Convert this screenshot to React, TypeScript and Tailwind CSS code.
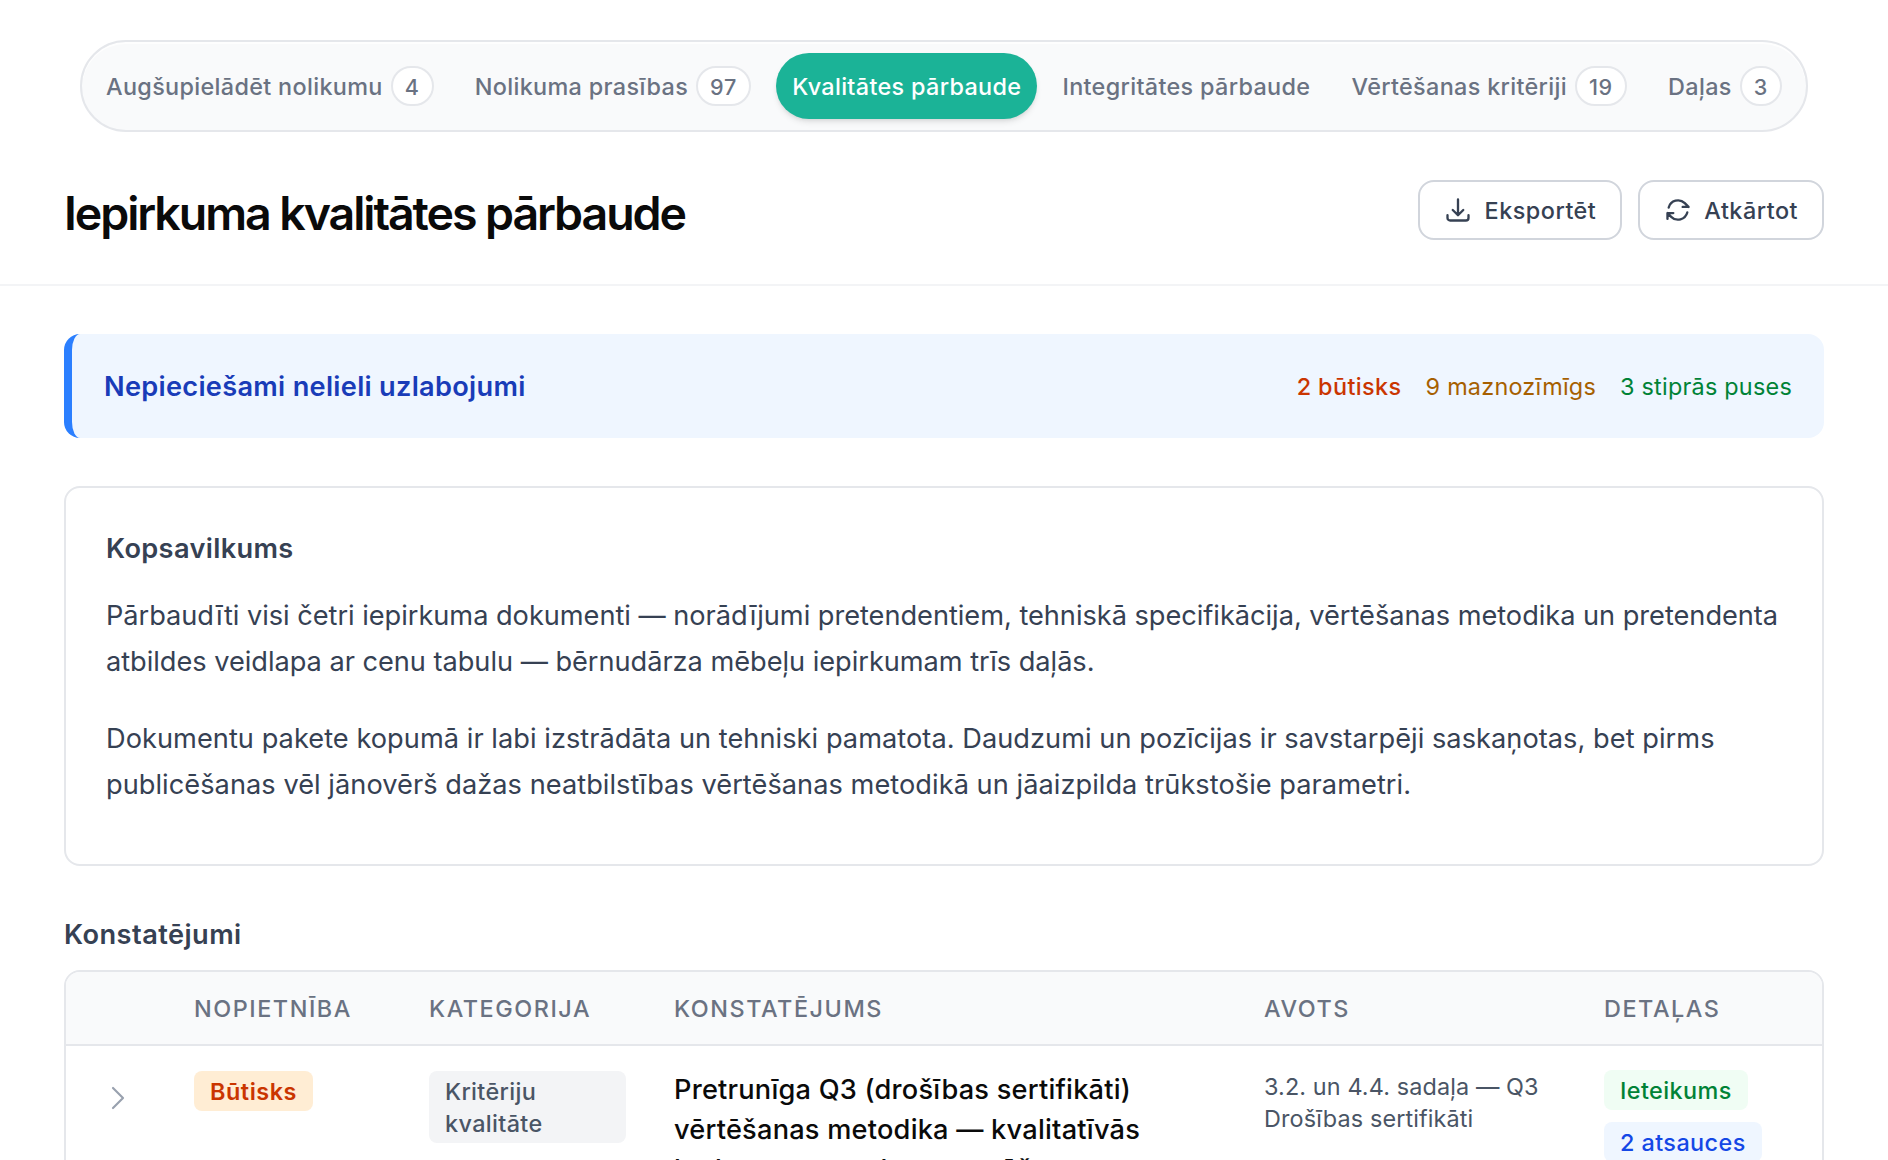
import { clsx } from "clsx";

const tabs = [
  { label: "Augšupielādēt nolikumu", count: 4 },
  { label: "Nolikuma prasības", count: 97 },
  { label: "Kvalitātes pārbaude", active: true },
  { label: "Integritātes pārbaude" },
  { label: "Vērtēšanas kritēriji", count: 19 },
  { label: "Daļas", count: 3 },
];

const columns = ["", "Nopietnība", "Kategorija", "Konstatējums", "Avots", "Detaļas"];

const findings = [
  {
    id: 1,
    severity: "Būtisks",
    category: "Kritēriju kvalitāte",
    title:
      "Pretrunīga Q3 (drošības sertifikāti) vērtēšanas metodika — kvalitatīvās kad atsauce uz kompensēšanas",
    source: ["3.2. un 4.4. sadaļa — Q3", "Drošības sertifikāti"],
    references: "2 atsauces",
  },
];

const gridCols = "grid grid-cols-[104px_235px_245px_590px_340px_242px]";

function DownloadIcon() {
  return (
    <svg className="size-7 shrink-0" viewBox="0 0 24 24" fill="none" stroke="currentColor" strokeWidth={2} strokeLinecap="round" strokeLinejoin="round">
      <path d="M3 16.5v2.25A2.25 2.25 0 0 0 5.25 21h13.5A2.25 2.25 0 0 0 21 18.75V16.5M16.5 12 12 16.5m0 0L7.5 12m4.5 4.5V3" />
    </svg>
  );
}

function RefreshIcon() {
  return (
    <svg className="size-7 shrink-0" viewBox="0 0 24 24" fill="none" stroke="currentColor" strokeWidth={2} strokeLinecap="round" strokeLinejoin="round">
      <path d="M16.023 9.348h4.992v-.001M2.985 19.644v-4.992m0 0h4.992m-4.993 0 3.181 3.183a8.25 8.25 0 0 0 13.803-3.7M4.031 9.865a8.25 8.25 0 0 1 13.803-3.7l3.181 3.182" />
    </svg>
  );
}

function ChevronIcon() {
  return (
    <svg className="size-8 text-gray-400" viewBox="0 0 24 24" fill="none" stroke="currentColor" strokeWidth={1.6} strokeLinecap="round" strokeLinejoin="round">
      <path d="m8.25 4.5 7.5 7.5-7.5 7.5" />
    </svg>
  );
}

function Tabs() {
  return (
    <nav className="mx-20 flex h-[92px] items-center justify-between rounded-full border-2 border-gray-200 bg-gray-50 px-2 shadow-[inset_0_2px_0_rgba(255,255,255,0.8)]">
      {tabs.map((tab) => (
        <button
          key={tab.label}
          className={clsx(
            "flex h-[66px] items-center gap-2 rounded-full px-4 text-[23.4px] font-medium tracking-[0.33px] whitespace-nowrap",
            tab.active ? "bg-[#1bb397] text-white shadow-md" : "text-gray-500"
          )}
        >
          <span className="pt-0.5">{tab.label}</span>
          {tab.count !== undefined && (
            <span className="flex h-10 items-center rounded-full border-2 border-gray-200 bg-white px-3 pt-0.5 text-[21.6px] tracking-[0.7px]">
              {tab.count}
            </span>
          )}
        </button>
      ))}
    </nav>
  );
}

function Header() {
  return (
    <header className="flex items-center justify-between border-b-2 border-gray-100 px-16 pt-12 pb-11">
      <h1 className="pt-1.5 text-[46.5px] leading-[52px] font-semibold tracking-[-2.08px] text-neutral-950">
        Iepirkuma kvalitātes pārbaude
      </h1>
      <div className="flex gap-4 text-[23.4px] font-medium tracking-[0.5px] text-gray-700">
        <button className="flex h-[60px] items-center gap-3 rounded-2xl border-2 border-gray-300 px-6">
          <DownloadIcon />
          <span className="pt-0.5 pl-px">Eksportēt</span>
        </button>
        <button className="flex h-[60px] items-center gap-3 rounded-2xl border-2 border-gray-300 px-6">
          <RefreshIcon />
          <span className="pt-0.5">Atkārtot</span>
        </button>
      </div>
    </header>
  );
}

function StatusBanner() {
  return (
    <div className="flex h-[104px] items-center justify-between rounded-2xl border-l-8 border-blue-500 bg-blue-50 px-8 pt-0.5">
      <p className="text-[27.2px] font-semibold tracking-[0.29px] text-blue-800">
        Nepieciešami nelieli uzlabojumi
      </p>
      <div className="flex gap-6 text-[23.4px] tracking-[0.24px]">
        <span className="font-medium tracking-[0.4px] text-orange-700">2 būtisks</span>
        <span className="text-yellow-700">9 maznozīmīgs</span>
        <span className="text-green-700">3 stiprās puses</span>
      </div>
    </div>
  );
}

function Summary() {
  return (
    <section className="rounded-2xl border-2 border-gray-200 px-10 pt-[41px] pb-[57px] text-gray-700">
      <h3 className="mb-6 text-[27.2px] leading-10 font-semibold tracking-[0.35px]">Kopsavilkums</h3>
      <div className="space-y-8 text-[27.2px] leading-[45.5px]">
        <p className="tracking-[-0.03px]">
          Pārbaudīti visi četri iepirkuma dokumenti — norādījumi pretendentiem, tehniskā specifikācija, vērtēšanas metodika un pretendenta
          atbildes veidlapa ar cenu tabulu — bērnudārza mēbeļu iepirkumam trīs daļās.
        </p>
        <p className="tracking-[0.04px]">
          Dokumentu pakete kopumā ir labi izstrādāta un tehniski pamatota. Daudzumi un pozīcijas ir savstarpēji saskaņotas, bet pirms
          publicēšanas vēl jānovērš dažas neatbilstības vērtēšanas metodikā un jāaizpilda trūkstošie parametri.
        </p>
      </div>
    </section>
  );
}

function FindingsTable() {
  return (
    <section>
      <h3 className="pt-px mb-[15px] text-[27.2px] leading-10 font-semibold tracking-[0.45px] text-gray-700">Konstatējumi</h3>
      <div className="overflow-hidden rounded-2xl border-2 border-gray-200">
        <div className={clsx(gridCols, "h-[74px] items-center border-b-2 border-gray-200 bg-gray-50 pt-0.5")}>
          {columns.map((column) => (
            <div key={column} className="px-6 text-[23.4px] font-medium tracking-[1.55px] text-gray-500 uppercase">
              {column}
            </div>
          ))}
        </div>
        {findings.map((finding) => (
          <div key={finding.id} className={clsx(gridCols, "items-start pt-6 text-[23.4px] leading-8 *:px-6")}>
            <div className="flex justify-center pt-3">
              <ChevronIcon />
            </div>
            <div>
              <span className="mt-px inline-block rounded-lg bg-orange-100 px-4 pt-[5px] pb-[3px] font-semibold tracking-[0.55px] text-orange-700">
                {finding.severity}
              </span>
            </div>
            <div>
              <span className="mt-px block rounded-lg bg-gray-100 px-4 pt-[5px] pb-[3px] font-medium tracking-[0.35px] text-gray-600">
                {finding.category}
              </span>
            </div>
            <p className="text-[27.2px] leading-10 font-medium tracking-[0.22px] text-neutral-950">
              <span className="block max-w-[510px]">{finding.title}</span>
            </p>
            <div className="pt-px tracking-[0.12px] text-gray-600">
              {finding.source.map((line) => (
                <p key={line}>{line}</p>
              ))}
            </div>
            <div className="flex flex-col items-start gap-3 font-medium tracking-[0.42px]">
              <span className="rounded-lg bg-green-50 px-4 pt-[5px] pb-[3px] text-green-700">Ieteikums</span>
              <span className="rounded-lg bg-blue-50 px-4 pt-[5px] pb-[3px] text-blue-700">{finding.references}</span>
            </div>
          </div>
        ))}
      </div>
    </section>
  );
}

export default function App() {
  return (
    <div className="h-[1160px] overflow-hidden bg-white pt-10 font-['Inter',sans-serif]">
      <Tabs />
      <Header />
      <main className="space-y-12 px-16 pt-12">
        <StatusBanner />
        <Summary />
        <FindingsTable />
      </main>
    </div>
  );
}
